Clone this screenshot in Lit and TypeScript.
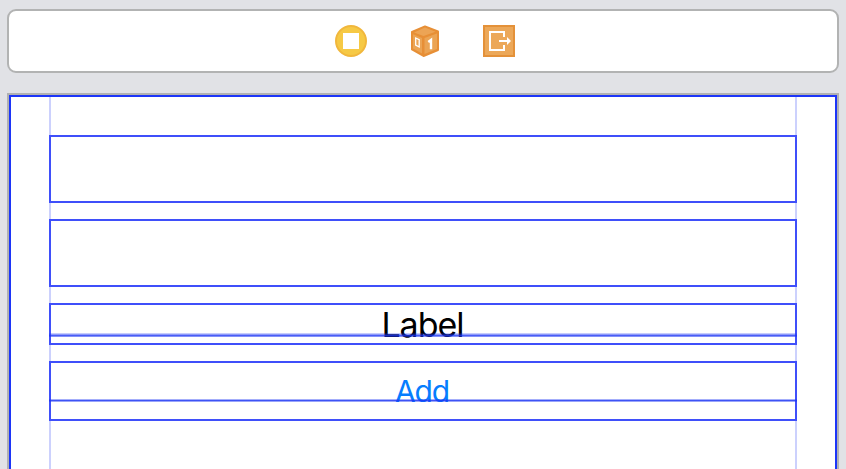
import { LitElement, html, css, svg } from "lit";
import { customElement } from "lit/decorators.js";

@customElement("scene-dock")
class SceneDock extends LitElement {
  static styles = css`
    :host {
      display: flex;
      box-sizing: border-box;
      height: 64px;
      justify-content: center;
      align-items: center;
      gap: 42px;
      padding-left: 4px;
      background: #fff;
      border: 2px solid #b2b3b3;
      border-radius: 9px;
    }
    svg { display: block; width: 32px; height: 32px; }
  `;

  render() {
    const controller = svg`
      <circle cx="16" cy="16" r="15" fill="#f6c945" stroke="#f1b73c" stroke-width="2"/>
      <rect x="8" y="8" width="16" height="16" fill="#fff"/>`;
    const responder = svg`
      <path d="M16 1.500 29 6.500V25L14.500 31 3 24.500V7Z" fill="#e78f36" stroke="#e78f36" stroke-width="2" stroke-linejoin="round"/>
      <path d="M16 2.500 26.500 6.700 14.500 11 5 7.500Z" fill="#eca455"/>
      <path d="M4 9.300 13 13V28.500L4 23.500Z" fill="#eba454"/>
      <path d="M15.500 13 28 8.500V24L15.500 29Z" fill="#eba454"/>
      <path d="M6.700 13 10.200 14.700V22L6.700 20Z" fill="none" stroke="#fff" stroke-width="1.300"/>
      <path d="M19.300 17 22 15V24.200" fill="none" stroke="#fff" stroke-width="2.400"/>`;
    const exit = svg`
      <rect x="1" y="1" width="30" height="30" fill="#eca859" stroke="#e49139" stroke-width="2"/>
      <path d="M21 12V7H7V25H21V20" fill="none" stroke="#fff" stroke-width="2"/>
      <path d="M16 16H25" fill="none" stroke="#fff" stroke-width="2"/>
      <path d="M24 12 28 16 24 20Z" fill="#fff"/>`;
    return html`
      <svg viewBox="0 0 32 32">${controller}</svg>
      <svg viewBox="0 0 32 32">${responder}</svg>
      <svg viewBox="0 0 32 32">${exit}</svg>`;
  }
}

@customElement("design-canvas")
class DesignCanvas extends LitElement {
  static styles = css`
    :host {
      display: block;
      box-sizing: border-box;
      border: 2px solid #b0b1b2;
      border-bottom: 0;
      background: #fff;
    }
    .view {
      box-sizing: border-box;
      height: 100%;
      border: 2px solid #1c35f8;
      border-bottom: 0;
      padding: 0 38px;
    }
    .margins {
      box-sizing: border-box;
      height: 100%;
      padding-top: 38px;
      border: 2px solid #ccd1fd;
      border-width: 0 2px;
      display: flex;
      flex-direction: column;
      gap: 16px;
    }
    .item {
      position: relative;
      box-sizing: border-box;
      margin: 0 -2px;
      border: 2px solid #3f4ffa;
      text-align: center;
      white-space: nowrap;
      font-family: Inter, "Liberation Sans", sans-serif;
    }
    .field { height: 68px; }
    .label { height: 42px; padding-right: 1px; font-size: 34px; line-height: 40px; letter-spacing: -1px; color: #000; }
    .button { height: 60px; padding-right: 2px; font-size: 30px; line-height: 56px; letter-spacing: -1.1px; color: #067dfe; }
    .baseline {
      position: absolute;
      left: -2px;
      right: -2px;
    }
    .label .baseline {
      top: 28px;
      height: 4px;
      background: linear-gradient(rgba(28,53,244,.25) 1px, rgba(28,53,244,.5) 1px 2px, rgba(28,53,244,.8) 2px 3px, rgba(28,53,244,.55) 3px);
    }
    .button .baseline {
      top: 36px;
      height: 3px;
      background: linear-gradient(rgba(28,53,244,.4) 1px, rgba(28,53,244,.85) 1px 2px, rgba(28,53,244,.45) 2px);
    }
  `;

  render() {
    return html`
      <div class="view">
        <div class="margins">
          <div class="item field"></div>
          <div class="item field"></div>
          <div class="item label">Label<div class="baseline"></div></div>
          <div class="item button">Add<div class="baseline"></div></div>
        </div>
      </div>`;
  }
}

@customElement("app-root")
class AppRoot extends LitElement {
  static styles = css`
    :host {
      display: flex;
      flex-direction: column;
      box-sizing: border-box;
      height: 100vh;
      gap: 20px;
      padding: 9px 7px 0;
      background: #e1e2e6;
      overflow: hidden;
    }
    scene-dock { flex: none; }
    design-canvas { flex: 1; min-height: 0; }
  `;

  render() {
    return html`<scene-dock></scene-dock><design-canvas></design-canvas>`;
  }
}
